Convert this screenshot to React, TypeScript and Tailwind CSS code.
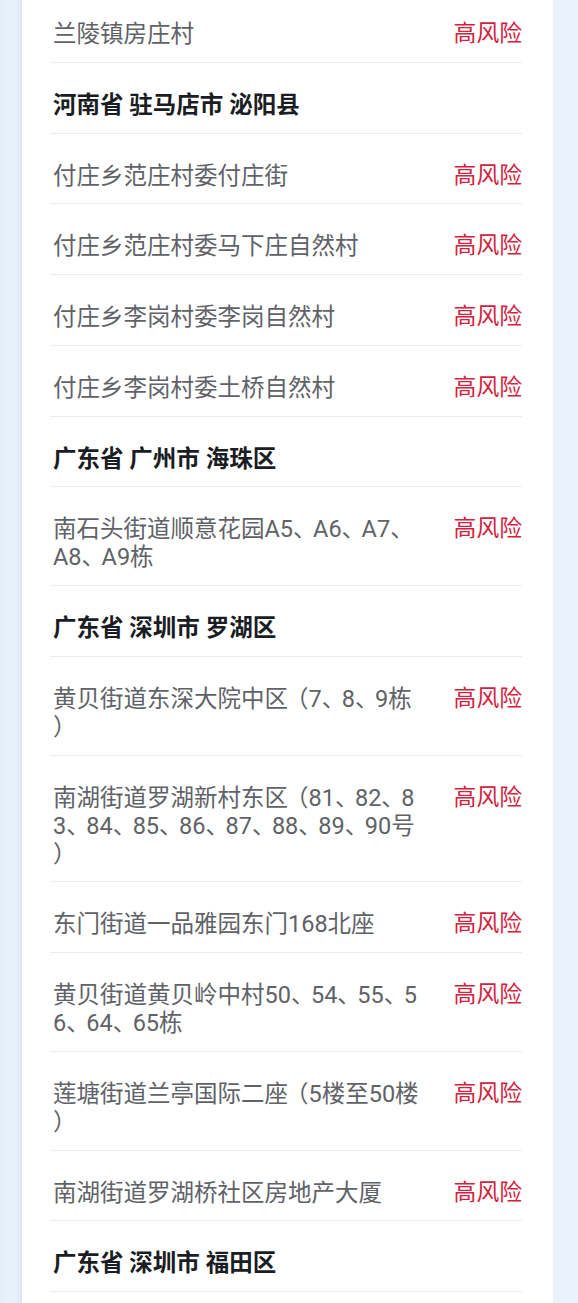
import React from "react";

type Item =
  | { kind: "header"; text: string }
  | { kind: "row"; lines: string[] };

const items: Item[] = [
  { kind: "row", lines: ["兰陵镇房庄村"] },
  { kind: "header", text: "河南省 驻马店市 泌阳县" },
  { kind: "row", lines: ["付庄乡范庄村委付庄街"] },
  { kind: "row", lines: ["付庄乡范庄村委马下庄自然村"] },
  { kind: "row", lines: ["付庄乡李岗村委李岗自然村"] },
  { kind: "row", lines: ["付庄乡李岗村委土桥自然村"] },
  { kind: "header", text: "广东省 广州市 海珠区" },
  { kind: "row", lines: ["南石头街道顺意花园A5、A6、A7、", "A8、A9栋"] },
  { kind: "header", text: "广东省 深圳市 罗湖区" },
  { kind: "row", lines: ["黄贝街道东深大院中区（7、8、9栋", "）"] },
  {
    kind: "row",
    lines: ["南湖街道罗湖新村东区（81、82、8", "3、84、85、86、87、88、89、90号", "）"],
  },
  { kind: "row", lines: ["东门街道一品雅园东门168北座"] },
  { kind: "row", lines: ["黄贝街道黄贝岭中村50、54、55、5", "6、64、65栋"] },
  { kind: "row", lines: ["莲塘街道兰亭国际二座（5楼至50楼", "）"] },
  { kind: "row", lines: ["南湖街道罗湖桥社区房地产大厦"] },
  { kind: "header", text: "广东省 深圳市 福田区" },
];

function Line({ text }: { text: string }) {
  // narrow the ideographic comma and the gap before a full-width paren, as in the original
  const parts = text.split(/(、|.(?=（))/);
  return (
    <div className="whitespace-nowrap">
      {parts.map((p, k) =>
        p === "、" || (p.length === 1 && text.includes(p + "（")) ? (
          <span key={k} className={p === "、" ? "tracking-[-3.5px]" : "tracking-[-3px]"}>
            {p}
          </span>
        ) : (
          <React.Fragment key={k}>{p}</React.Fragment>
        )
      )}
    </div>
  );
}

export default function App() {
  return (
    <div
      className="w-[578px] h-[1303px] overflow-hidden bg-[#e9f2fa] flex"
      style={{ fontFamily: '"Roboto", "Noto Sans CJK SC", sans-serif' }}
    >
      <div className="w-[22px] shrink-0 bg-gradient-to-r from-[#e3eef8] via-[#e8f2fb] to-[#e2edf7]" />
      <div className="w-[531px] shrink-0 bg-white pl-[28px] pr-[31px] shadow-[0_0_3px_rgba(150,180,210,0.25)]">
        <div className="-mt-[8px] flex flex-col">
          {items.map((it, i) =>
            it.kind === "header" ? (
              <div
                key={i}
                className="pt-[28px] pb-[13.75px] pl-[3px] border-b border-[#ededed] text-[23.5px] leading-[28px] font-bold text-[#1a1d23] whitespace-nowrap"
              >
                {it.text}
              </div>
            ) : (
              <div
                key={i}
                className="pt-[28px] pb-[13.75px] pl-[3px] border-b border-[#ededed] flex items-start justify-between gap-4 text-[23.5px] leading-[28px]"
              >
                <div className="min-w-0 text-[#606268]">
                  {it.lines.map((l, j) => (
                    <Line key={j} text={l} />
                  ))}
                </div>
                <div className="shrink-0 text-[22.8px] text-[#d2223e]">高风险</div>
              </div>
            )
          )}
        </div>
      </div>
      <div className="flex-1 bg-[#eaf3fb]" />
    </div>
  );
}
